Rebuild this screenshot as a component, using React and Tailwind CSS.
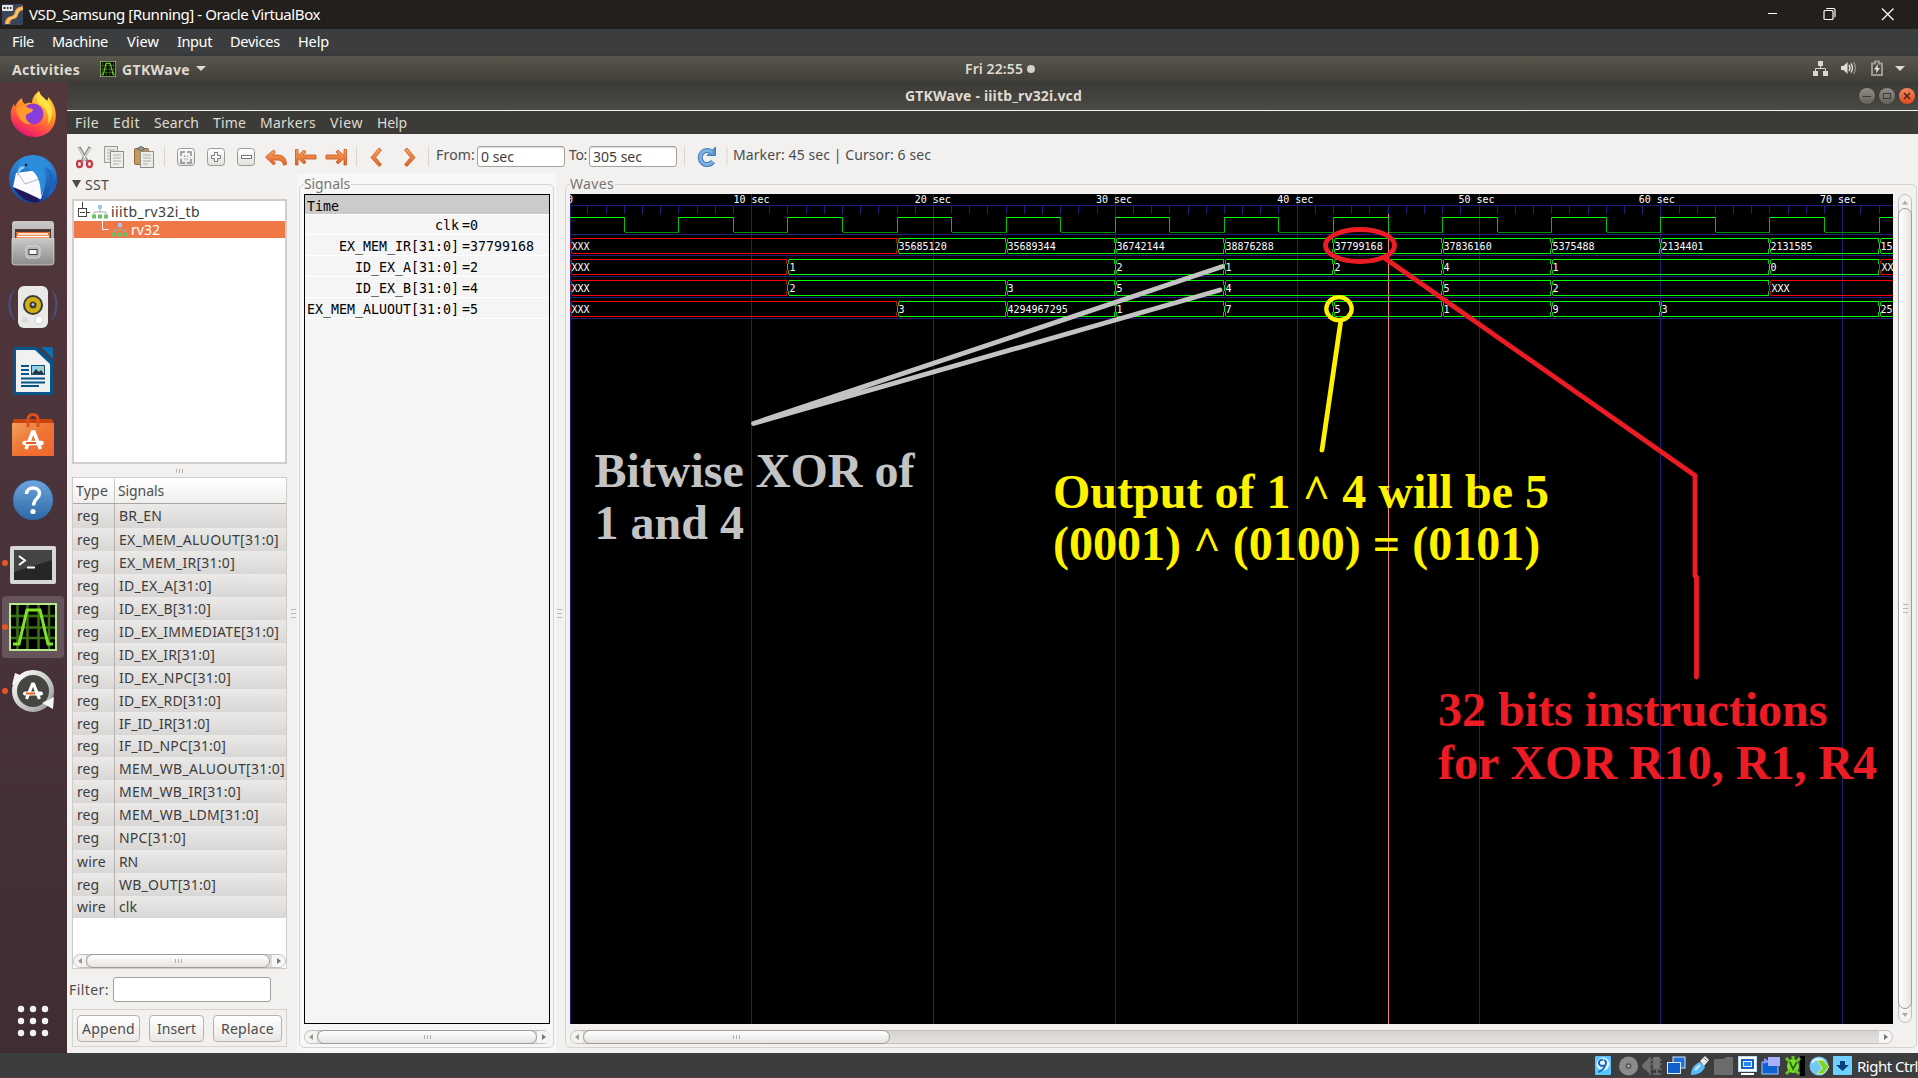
import React, { useLayoutEffect, useRef, useState } from "react";

/* Text run whose tracking is adjusted so that it spans `w` pixels. */
function Fit({ w, children, className = "" }) {
  const ref = useRef(null);
  const [ls, setLs] = useState(0);
  useLayoutEffect(() => {
    const natural = ref.current.getBoundingClientRect().width;
    setLs((w - natural) / String(children).length);
  }, [w, children]);
  return (
    <span ref={ref} className={"inline-block shrink-0 whitespace-pre " + className} style={{ letterSpacing: ls + "px" }}>
      {children}
    </span>
  );
}

/* ---------- host window ---------- */

const hostMenu = [["File", 22, 40], ["Machine", 56, 75], ["View", 32, 50], ["Input", 35, 53], ["Devices", 50, 68], ["Help", 31, 40]];

function HostTitle() {
  return (
    <div className="flex h-[29px] items-center bg-[#231f1c] pl-[2px] text-[15px] text-white">
      <svg width="21" height="21" viewBox="0 0 21 21" className="mr-[6px]">
        <rect width="21" height="21" rx="1" fill="#39455a" />
        <path d="M3 20q0-7 6-8 3 0 4-5 1-4 8-5v4q-4 1-5 5-1 4-5 4-3 1-3 5z" fill="#f6a23a" />
        <path d="M5 20q0-5 5-6 4-1 5-6 1-3 6-3" fill="none" stroke="#fbd078" strokeWidth="1.500" />
        <rect x="0" y="1" width="11" height="6" rx="1" fill="#e8e8e8" />
        <path d="M1.500 3h2v2h-2zM5 3h1.500v2H5zM8 3h1.500v2H8z" fill="#333" />
      </svg>
      <Fit w={291} className="-mt-[2px]">VSD_Samsung [Running] - Oracle VirtualBox</Fit>
      <svg width="150" height="29" viewBox="0 0 150 29" className="ml-auto" fill="none" stroke="#fff">
        <path d="M-3 13.500h12" />
        <path d="M56 11.500q0-1 1-1h7q1 0 1 1v7q0 1-1 1h-7q-1 0-1-1zM58.500 9q0-.5 1-.5h6q1.500 0 1.500 1.500v6.500q0 .5-.5.500" strokeWidth="1.200" />
        <path d="M114 8.500l11.500 11.500M125.500 8.500l-11.500 11.500" strokeWidth="1.200" />
      </svg>
    </div>
  );
}

function HostMenu() {
  return (
    <div className="flex h-[27px] items-center border-b-[3px] border-[#36383a] bg-[#3c3d3f] pl-[12px] text-[14.5px] text-white">
      {hostMenu.map(([t, w, s]) => (
        <div key={t} className="flex shrink-0" style={{ width: s }}>
          <Fit w={w}>{t}</Fit>
        </div>
      ))}
    </div>
  );
}

function HostStatus() {
  return (
    <div className="flex h-[25px] shrink-0 items-center justify-end overflow-hidden border-b border-[#4b4040] bg-[#3c3d3f] pt-[2px] text-[15px] text-white">
      <svg width="260" height="20" viewBox="1594 1057 260 20" className="mr-[3px] shrink-0">
        <rect x="1595" y="1057" width="16" height="19" rx="1" fill="#5cc4ff" />
        <circle cx="1603" cy="1065" r="6.500" fill="#eaf6ff" />
        <path d="M1603 1061a3 3 0 1 0 1 5M1604 1061q3 1 1.500 5-2 5-7 7" stroke="#1769c8" strokeWidth="2" fill="none" />
        <circle cx="1628.500" cy="1067" r="9.500" fill="#8b8b8b" />
        <circle cx="1628.500" cy="1067" r="3" fill="#5a5a5a" />
        <circle cx="1628.500" cy="1067" r="1" fill="#ddd" />
        <path d="M1643 1066l6-6v13l-6-5zM1650 1058v18" fill="#6f6f6f" stroke="#6f6f6f" strokeWidth="1.500" />
        <rect x="1653" y="1058" width="7" height="11" rx="1" fill="#777" />
        <path d="M1651 1061h11M1651 1065h11M1652 1070h10M1657 1070v6M1653 1075h8" stroke="#707070" strokeWidth="1.500" />
        <rect x="1673" y="1058" width="12" height="11" fill="#1f6fd8" stroke="#cfe5fb" />
        <rect x="1667.500" y="1063.500" width="13" height="11" fill="#0f60cf" stroke="#d9ecff" />
        <path d="M1691 1076c0-7 4-11 9-13l5 5c-2 5-7 8-14 8z" fill="#58bdf5" />
        <path d="M1695 1071l5-5" stroke="#c8efff" strokeWidth="2" />
        <path d="M1700 1062l5-5 4 4-5 6z" fill="#e8e8e8" />
        <path d="M1704.500 1059.500l2 2" stroke="#444" />
        <path d="M1714 1060h10l2-2h7v18h-19z" fill="#6c6c6c" />
        <rect x="1738.500" y="1057.500" width="18" height="15" fill="#fff" stroke="#b9dcff" />
        <rect x="1741" y="1060" width="13" height="10" fill="#1161d2" />
        <rect x="1743.500" y="1062.500" width="8" height="5" fill="#2b85ef" stroke="#dff" />
        <path d="M1741 1075h13" stroke="#fff" strokeWidth="2" />
        <rect x="1762" y="1063" width="16" height="12" fill="#0f62d3" stroke="#9fc9f7" />
        <rect x="1768" y="1058" width="12" height="9" fill="#a9b0ff" />
        <path d="M1764 1059l5 3-5 3z" fill="#8b94f7" />
        <rect x="1800" y="1057" width="5" height="20" fill="#000" />
        <ellipse cx="1793" cy="1067" rx="6" ry="7" fill="#7bdd2c" />
        <path d="M1786 1059l4 4M1800 1059l-4 4M1786 1075l4-4M1799 1075l-4-4M1793 1057v4" stroke="#65c71e" strokeWidth="3" />
        <path d="M1790 1063l3 7 4-7" stroke="#24680a" strokeWidth="1.800" fill="none" />
        <circle cx="1819" cy="1067" r="9.500" fill="#73c8f4" />
        <path d="M1812 1064c3-5 8-5 12-2" stroke="#d9f3ff" strokeWidth="2" fill="none" />
        <path d="M1817 1061h6l6 7-6 7h-6l5-6z" fill="#7fd62a" stroke="#e6ffd0" strokeWidth=".7" />
        <rect x="1833" y="1057" width="19" height="19" rx="1" fill="#6ed0ff" />
        <path d="M1840 1062h5v4h4l-6.500 6-6.500-6h4z" fill="#0a3d80" />
      </svg>
      <Fit w={61}>Right Ctrl</Fit>
    </div>
  );
}

/* ---------- guest desktop ---------- */

function WaveLogo({ size }) {
  return (
    <svg width={size} height={size} viewBox="0 0 48 48">
      <rect width="48" height="48" fill="#b6ea8c" />
      <rect x="2" y="2" width="44" height="44" fill="#000" />
      <path d="M8.500 2v44M18.500 2v44M29.500 2v44M40 2v44M2 13h44M2 24.500h44M2 35h44" stroke="#3c7016" strokeWidth="2.500" />
      <path d="M4 41h6L18 7h13l8 34h5" fill="none" stroke="#7fe32b" strokeWidth="3" />
    </svg>
  );
}

function TopPanel() {
  return (
    <div className="flex h-[26px] items-center bg-linear-to-b from-[#59564c] to-[#403e39] text-[14px] font-bold text-[#dfdbd2]">
      <Fit w={68} className="ml-[12px] pt-[2px]">Activities</Fit>
      <div className="ml-[20px] mr-[6px]"><WaveLogo size={16} /></div>
      <Fit w={68} className="pt-[2px]">GTKWave</Fit>
      <svg width="10" height="6" className="ml-[6px]"><path d="M0 0h10L5 5z" fill="#dfdbd2" /></svg>
      <Fit w={58} className="ml-[759px] font-semibold">Fri 22:55</Fit>
      <div className="ml-[4px] h-[8px] w-[8px] rounded-full bg-[#d3d0c9]" />
      <svg width="100" height="18" viewBox="1810 61 100 18" className="ml-auto mr-[8px]">
        <path d="M1818 62h5v5h-5zM1813 72h5v5h-5zM1823 72h5v5h-5z" fill="#d9d6cf" />
        <path d="M1820.500 67v3M1815.500 72v-2.500h10V72" stroke="#d9d6cf" fill="none" />
        <path d="M1841 67h2.500l4-4v12l-4-4H1841z" fill="#e0ddd6" />
        <path d="M1849 66q2 3 0 6M1851 64.500q3 4.500 0 9" stroke="#e0ddd6" strokeWidth="1.400" fill="none" />
        <path d="M1853.500 63q4 6 0 12" stroke="#8b8982" strokeWidth="1.400" fill="none" />
        <path d="M1872 64.500h3v-2h4v2h3v11.500h-10z" fill="none" stroke="#9b9992" strokeWidth="2" />
        <path d="M1878 65l-4 5.500h2.500l-.5 4 4-5.500h-2.500z" fill="#e8e5de" />
        <path d="M1895 67h10l-5 5z" fill="#dfdbd2" />
      </svg>
    </div>
  );
}

function Dock() {
  return (
    <div className="flex w-[67px] shrink-0 flex-col bg-linear-to-b from-[#53373b] via-[#48333a] to-[#3f2d32]">
      <svg width="67" height="971" viewBox="0 82 67 971">
        <defs>
          <linearGradient id="ff" x1=".8" y1="0" x2=".3" y2="1"><stop offset="0" stopColor="#ffe847" /><stop offset=".45" stopColor="#ff9226" /><stop offset=".75" stopColor="#ff4348" /><stop offset="1" stopColor="#e1107f" /></linearGradient>
          <radialGradient id="fp"><stop offset="0" stopColor="#7a42e8" /><stop offset="1" stopColor="#9a38c8" /></radialGradient>
          <linearGradient id="gr" x1="0" y1="0" x2="0" y2="1"><stop offset="0" stopColor="#c9c9c7" /><stop offset="1" stopColor="#8c8c8a" /></linearGradient>
          <linearGradient id="bl" x1="0" y1="0" x2="0" y2="1"><stop offset="0" stopColor="#6fa5dd" /><stop offset="1" stopColor="#2b68a6" /></linearGradient>
          <linearGradient id="tb" x1="0" y1="0" x2="0" y2="1"><stop offset="0" stopColor="#2f92e2" /><stop offset="1" stopColor="#17469a" /></linearGradient>
          <linearGradient id="bg" x1="0" y1="0" x2="1" y2="1"><stop offset="0" stopColor="#eea15c" /><stop offset=".5" stopColor="#ee7434" /><stop offset="1" stopColor="#f0662c" /></linearGradient>
          <linearGradient id="wh" x1="0" y1="0" x2="1" y2="1"><stop offset="0" stopColor="#fff" /><stop offset="1" stopColor="#9a9a98" /></linearGradient>
        </defs>
        {/* browser */}
        <path d="M22 98c0 3 1 5 3 6 3-2 6-1 7-1 0-5 3-9 7-12 1 5 5 7 8 10 1-1 1-3 1-4 11 11 9 26 3 33-8 9-22 9-31 2-10-7-12-20-6-28l1 3c1-4 4-7 7-9z" fill="url(#ff)" />
        <circle cx="33" cy="114" r="10.500" fill="url(#fp)" />
        <path d="M16 109c4-4 9-4 12-1l5 1c0 4-5 4-7 6-1 4 2 8 6 9-7 2-14-4-16-15z" fill="#ff9a2b" />
        <path d="M39 91c1 6 9 8 12 16 2 5 1 12-3 17 2-9-2-17-8-19-4-3-5-9-1-14z" fill="#ffe144" />
        {/* mail */}
        <circle cx="33" cy="179" r="24" fill="url(#tb)" />
        <path d="M16 173l22-3 7 14-4 15c-10-2-21-6-28-12z" fill="#fbfbfd" />
        <path d="M18 173l7 11 17-6" fill="none" stroke="#b8b8be" />
        <path d="M13 187q13 5 25 11l2 4q-16 3-27-15z" fill="#24185c" />
        <path d="M17 171c1-9 8-16 17-15 9 2 15 6 18 14l-9-3c4 8 4 18-2 29 0-12-3-22-10-26-5-3-9-3-14 1z" fill="#2c8ddd" />
        <path d="M45 166q10 12 2 32 11-9 10-21-3 4-4 5 1-10-8-16z" fill="#1c62bd" />
        <path d="M17 177q0-10 6-11l2 2q-5 1-8 9z" fill="#8ecbf5" /><circle cx="26" cy="165" r="1.200" fill="#111" />
        {/* file cabinet */}
        <rect x="12" y="221" width="42" height="44" rx="3" fill="url(#gr)" />
        <rect x="15" y="229" width="36" height="12" fill="#4b3a33" />
        <path d="M16 232h34v9H16z" fill="#e8702b" /><path d="M18 234h30M17 236.500h32" stroke="#fff" strokeWidth="1.300" />
        <path d="M12 238.500h42V262q0 3-3 3H15q-3 0-3-3z" fill="url(#gr)" stroke="#dcdcda" strokeWidth=".7" />
        <rect x="26" y="246" width="14" height="12" rx="3" fill="#b5b5b3" stroke="#d8d8d6" />
        <rect x="29" y="249.500" width="8" height="5" fill="#f5f5f5" stroke="#444" />
        {/* music */}
        <path d="M14 290q-8 14 0 30M52 290q8 14 0 30M11 294q-4 11 0 22M55 294q4 11 0 22" stroke="#4c5078" strokeWidth="1.200" fill="none" />
        <rect x="18" y="286" width="30" height="42" rx="6" fill="#e9e9e7" />
        <circle cx="33" cy="305" r="10" fill="#3b3b39" /><circle cx="33" cy="305" r="8" fill="#d2b013" /><circle cx="33" cy="305" r="3.500" fill="#3c3f48" /><circle cx="33" cy="304.500" r="1.300" fill="#ccd" />
        <circle cx="39" cy="320" r="4" fill="#fff" stroke="#c8c8c8" strokeWidth=".8" /><circle cx="25" cy="320" r="3" fill="#dcdcda" />
        {/* writer */}
        <path d="M13 349q0-2 2-2h22l16 14v32q0 2-2 2H15q-2 0-2-2z" fill="#06568a" />
        <path d="M16 350h19l15 14v28H16z" fill="#f1f1f1" />
        <path d="M41 347h10q2 0 2 2v10z" fill="#0a70ad" />
        <path d="M21 366h8M21 370h8M21 374h8M21 378.500h24M21 382.500h24M21 386h18" stroke="#06568a" strokeWidth="1.800" />
        <rect x="31.500" y="365.500" width="13" height="9" fill="#8fd0ee" stroke="#06568a" /><path d="M32 374l4-5 3 3 2-2 3 4z" fill="#333" /><circle cx="42" cy="368" r="1.500" fill="#f4c63c" />
        {/* software */}
        <path d="M14 419h38l2 5H12z" fill="#c9430f" />
        <path d="M12 423h42v33H12z" fill="url(#bg)" />
        <path d="M28 427v-7q0-5.500 5-5.500t5 5.500v7" fill="none" stroke="#de4f1c" strokeWidth="3" />
        <path d="M26 449l6.500-17h1.500l6.500 17" fill="none" stroke="#fff" strokeWidth="3.500" /><path d="M24.500 443h17" stroke="#fff" strokeWidth="4.500" strokeLinecap="round" /><path d="M26 443h10" stroke="#ea5a1c" strokeWidth="2" />
        {/* help */}
        <circle cx="33" cy="500" r="20" fill="url(#bl)" stroke="#2a609a" strokeWidth=".6" />
        <path d="M26.500 494c0-4 3-6 6.500-6 4 0 6.500 2.500 6.500 5.500 0 5-6 5-6 12" fill="none" stroke="#fff" strokeWidth="3.400" /><circle cx="33" cy="511.500" r="2.600" fill="#fff" />
        {/* terminal */}
        <rect x="10" y="546" width="46" height="38" rx="2" fill="#d7d7d5" /><rect x="14" y="550" width="38" height="30" fill="#262626" /><path d="M14 550h38v10l-38 12z" fill="#444" />
        <path d="M19 556l6 4.500-6 4.500" fill="none" stroke="#fff" strokeWidth="2" /><path d="M27 567.500h8" stroke="#fff" strokeWidth="2" />
        {/* wave viewer */}
        <rect x="2" y="596" width="62" height="62" rx="4" fill="#67545a" />
        <svg x="9" y="603"><WaveLogo size={48} /></svg>
        {/* updater */}
        <circle cx="33" cy="691" r="18.500" fill="#454642" stroke="url(#wh)" strokeWidth="5" />
        <path d="M12 685l3-12 10 4zM54 697l-1 12-11-6z" fill="#f4f4f2" />
        <path d="M26.500 699l6-15h1l6 15" fill="none" stroke="#fff" strokeWidth="3.200" /><path d="M25 693.500h16" stroke="#fff" strokeWidth="4" strokeLinecap="round" /><path d="M26 693.500h9" stroke="#ea5a1c" strokeWidth="2" />
        {[563, 627, 691].map((y) => <circle key={y} cx="5" cy={y} r="3" fill="#e95420" />)}
        {[1009, 1021, 1033].map((y) => [21, 33, 45].map((x) => <circle key={x + "-" + y} cx={x} cy={y} r="3.200" fill="#f2f2f2" />))}
      </svg>
    </div>
  );
}

/* ---------- wave viewer window ---------- */

const appMenu = [["File", 24, 38], ["Edit", 27, 41], ["Search", 45, 59], ["Time", 33, 47], ["Markers", 56, 70], ["View", 33, 47], ["Help", 30, 40]];

function WindowTitle() {
  return (
    <div className="flex h-[29px] items-center border-b border-[#f2f1f0] bg-linear-to-b from-[#3b3a36] to-[#4b4943] pl-[838px] text-[14px] font-bold text-[#dfdbd2]">
      <Fit w={177}>GTKWave - iiitb_rv32i.vcd</Fit>
      <div className="ml-auto mr-[3px] flex gap-[4px]">
        <div className="flex h-4 w-4 items-center justify-center rounded-full bg-linear-to-b from-[#8e8c84] to-[#65635c] shadow"><div className="h-px w-2 bg-[#3b3a36]" /></div>
        <div className="flex h-4 w-4 items-center justify-center rounded-full bg-linear-to-b from-[#8e8c84] to-[#65635c] shadow"><div className="h-[6px] w-2 border border-[#3b3a36]" /></div>
        <div className="flex h-4 w-4 items-center justify-center rounded-full bg-linear-to-b from-[#f58461] to-[#df4b1c] shadow">
          <svg width="8" height="8"><path d="M1 1l6 6M7 1L1 7" stroke="#4d2012" strokeWidth="1.500" /></svg>
        </div>
      </div>
    </div>
  );
}

function AppMenu() {
  return (
    <div className="flex h-[23px] items-center bg-[#3c3b37] pl-[8px] text-[14px] text-[#dfdbd2]">
      {appMenu.map(([t, w, s]) => (
        <div key={t} className="flex shrink-0" style={{ width: s }}>
          <Fit w={w}>{t}</Fit>
        </div>
      ))}
    </div>
  );
}

function Entry({ children }) {
  return (
    <div className="flex h-[21px] w-[88px] items-center rounded-[3px] border border-[#a5a19b] bg-white pl-[3px] text-[#3c3c3c] shadow-[inset_0_1px_1px_#ddd]">
      {children}
    </div>
  );
}

function Toolbar() {
  return (
    <div className="flex h-[39px] items-start bg-[#f2f1f0] pt-[11px] text-[14px] text-[#4c4c4c]">
      <svg width="367" height="26" viewBox="67 144 367 26" className="shrink-0">
        <defs>
          <linearGradient id="or" x1="0" y1="0" x2="0" y2="1"><stop offset="0" stopColor="#f4a45e" /><stop offset="1" stopColor="#e0622a" /></linearGradient>
          <linearGradient id="bt" x1="0" y1="0" x2="0" y2="1"><stop offset="0" stopColor="#fff" /><stop offset="1" stopColor="#e0e0de" /></linearGradient>
        </defs>
        <path d="M79 146l8 14M90 146l-8 14" stroke="#8b8d89" strokeWidth="3" /><path d="M79 147l7 12M90 147l-7 12" stroke="#e2e3e0" strokeWidth="1.300" />
        <ellipse cx="79.500" cy="163" rx="2.500" ry="3.200" fill="none" stroke="#c83a46" strokeWidth="2.200" /><ellipse cx="89.500" cy="163" rx="2.500" ry="3.200" fill="none" stroke="#c83a46" strokeWidth="2.200" />
        <rect x="104.500" y="145.500" width="13" height="16" fill="#ecece9" stroke="#9a9b97" /><path d="M107 149h8M107 152h8M107 155h4M107 158h4" stroke="#aaa" />
        <rect x="110.500" y="150.500" width="13" height="16" fill="#f0f0ed" stroke="#8e8f8b" /><path d="M113 154h8M113 157h8M113 160h8M113 163h6" stroke="#aaa" />
        <rect x="134.500" y="147.500" width="14" height="16" rx="1" fill="#c4985a" stroke="#8f6a35" /><path d="M138 149v-2q3-3 6 0v2z" fill="#999" stroke="#666" />
        <rect x="140.500" y="150.500" width="13" height="16" fill="#ecece9" stroke="#8e8f8b" /><path d="M143 154h8M143 157h8M143 160h8M143 163h5" stroke="#aaa" />
        <path d="M164.500 146v19M356.500 146v19M428.500 146v19" stroke="#d9d6d2" />
        {[177.500, 207.500, 237.500].map((x) => <rect key={x} x={x} y="147.500" width="17" height="17" rx="3" fill="url(#bt)" stroke="#9a9b97" />)}
        <path d="M181 155v-4h4M187 151h4v4M191 158v4h-4M185 162h-4v-4" fill="none" stroke="#888" strokeWidth="1.400" /><path d="M184.500 154.500v1h1M187.500 154.500v1M184.500 158h1M187.500 158h-1" fill="none" stroke="#888" />
        <path d="M214.500 151.500h3v3h3v3h-3v3h-3v-3h-3v-3h3z" fill="#fff" stroke="#777" />
        <rect x="241.500" y="154.500" width="10" height="3" fill="#fff" stroke="#777" />
        <g fill="url(#or)" stroke="#cf5f25" strokeWidth=".9" strokeLinejoin="round">
          <path d="M265.500 156l8-7 2 2-2.500 3h5q8 0 8.500 9l-1 1h-2q-1-5-6-5h-5l3 3-2 2z" />
          <path d="M295.500 148.500h2.500v6l6-5.500 2 2-3 3h13v4h-13l3 3-2 2-6-5.500v6.500h-2.500z" />
          <path d="M346.500 148.500h-2.500v6l-6-5.500-2 2 3 3h-13v4h13l-3 3 2 2 6-5.500v6.500h2.500z" />
          <path d="M379 147l2.500 2-6 7.500 6 7-2.500 2-8-9z" />
          <path d="M407 147l-2.500 2 6 7.500-6 7 2.500 2 8-9z" />
        </g>
      </svg>
      <Fit w={39} className="ml-[2px]">From:</Fit>
      <div className="ml-[2px] mt-[1px]"><Entry><Fit w={33}>0 sec</Fit></Entry></div>
      <Fit w={18} className="ml-[4px]">To:</Fit>
      <div className="ml-[2px] mt-[1px]"><Entry><Fit w={49}>305 sec</Fit></Entry></div>
      <svg width="56" height="24" viewBox="677 145 56 24" className="shrink-0">
        <path d="M684.500 147v18M727 147v18" stroke="#d9d6d2" />
        <path d="M713 161.500a7 7 0 1 1-1-9" fill="none" stroke="#3f7ab8" strokeWidth="5" /><path d="M707 155.500h8.500V147z" fill="#5d97d3" stroke="#3f7ab8" />
        <path d="M713 161.500a7 7 0 1 1-1-9" fill="none" stroke="#7fb0e2" strokeWidth="3" />
      </svg>
      <Fit w={198}>Marker: 45 sec | Cursor: 6 sec</Fit>
    </div>
  );
}

function Grip({ vertical }) {
  return (
    <div className={vertical ? "flex flex-col gap-[3px]" : "flex gap-[2px]"}>
      {[0, 1, 2].map((i) => <div key={i} className={vertical ? "h-px w-[5px] bg-[#bbb8b4]" : "h-[4px] w-px bg-[#b3b0ac]"} />)}
    </div>
  );
}

/* Horizontal scroll bar; `thumb` is the thumb's width class. */
function HScroll({ thumb }) {
  return (
    <div className="flex h-[14px] w-full items-center rounded-full border border-[#c4c1bd] bg-linear-to-b from-[#d6d3d0] to-[#e3e2e0]">
      <div className="flex h-full w-[12px] shrink-0 items-center justify-center rounded-l-full bg-[#f4f3f2]"><svg width="4" height="6"><path d="M4 0v6L0 3z" fill="#9a9895" /></svg></div>
      <div className={"flex h-[14px] shrink-0 items-center justify-center rounded-full border border-[#a09b96] bg-linear-to-b from-white to-[#e6e4e2] " + thumb}><Grip /></div>
      <div className="ml-auto flex h-full w-[13px] shrink-0 items-center justify-center rounded-r-full bg-[#f7f6f6]"><svg width="4" height="6"><path d="M0 0v6l4-3z" fill="#777" /></svg></div>
    </div>
  );
}

function TreeIcon({ className }) {
  return (
    <svg width="16" height="14" viewBox="0 0 16 14" className={className}>
      <rect x="6" y="0" width="4" height="4" fill="#a3c4ee" />
      <path d="M8 4v3M2 9V7h12v2" stroke="#aaa" fill="none" />
      <path d="M0 9.500h4v4H0zM6 9.500h4v4H6zM12 9.500h4v4h-4z" fill="#6cc067" />
    </svg>
  );
}

const rows = [
  ["reg", "BR_EN", 43, 24], ["reg", "EX_MEM_ALUOUT[31:0]", 160], ["reg", "EX_MEM_IR[31:0]", 116], ["reg", "ID_EX_A[31:0]", 93],
  ["reg", "ID_EX_B[31:0]", 92], ["reg", "ID_EX_IMMEDIATE[31:0]", 160], ["reg", "ID_EX_IR[31:0]", 96], ["reg", "ID_EX_NPC[31:0]", 112],
  ["reg", "ID_EX_RD[31:0]", 102], ["reg", "IF_ID_IR[31:0]", 91], ["reg", "IF_ID_NPC[31:0]", 107, 22], ["reg", "MEM_WB_ALUOUT[31:0]", 166],
  ["reg", "MEM_WB_IR[31:0]", 122], ["reg", "MEM_WB_LDM[31:0]", 140], ["reg", "NPC[31:0]", 67, 24], ["wire", "RN", 19],
  ["reg", "WB_OUT[31:0]", 97], ["wire", "clk", 18, 22],
];

function Button({ children, w, className }) {
  return (
    <div className={"flex h-[27px] items-center justify-center rounded-[4px] border border-[#b6b2ad] bg-linear-to-b from-white to-[#eae8e6] pt-[1px] " + className}>
      <Fit w={w}>{children}</Fit>
    </div>
  );
}

function SidePanel() {
  return (
    <div className="flex w-[224px] shrink-0 flex-col pl-[5px] text-[14px] text-[#4c4c4c]">
      <div className="flex h-[26px] items-center pb-[2px]">
        <svg width="9" height="9" className="-mt-[4px] mr-[4px]"><path d="M0 1h9L4.500 9z" fill="#4c4c4c" /></svg>
        <Fit w={24}>SST</Fit>
      </div>
      <div className="h-[265px] w-[215px] border-2 border-[#d0cdca] bg-white pt-[1px] text-[#3c3c3c]">
        <div className="flex h-[19px] items-center">
          <svg width="15" height="19" className="ml-[2px]"><path d="M6.500 0v6M11 10.500h3" stroke="#444" /><rect x="2.500" y="6.500" width="8" height="8" fill="#fff" stroke="#444" /><path d="M4 10.500h5" stroke="#444" /></svg>
          <TreeIcon className="ml-[1px] mr-[3px]" />
          <Fit w={89}>iiitb_rv32i_tb</Fit>
        </div>
        <div className="flex h-[17px] items-center bg-[#f07746] text-white">
          <svg width="8" height="17" className="ml-[28px]"><path d="M.5 0v8.500h6" stroke="#fff" fill="none" /></svg>
          <TreeIcon className="ml-[2px] mr-[3px]" />
          <Fit w={29}>rv32</Fit>
        </div>
      </div>
      <div className="flex h-[13px] w-[215px] items-center justify-center"><Grip /></div>
      <div className="flex h-[492px] w-[215px] flex-col border border-[#cfccc9] bg-white">
        <div className="flex h-[26px] shrink-0 items-center border-b border-[#aaa7a4] bg-linear-to-b from-white to-[#f0efee] pt-[1px]">
          <div className="flex h-full w-[42px] items-center border-r border-[#c9c6c3] pl-[3px]"><Fit w={32}>Type</Fit></div>
          <Fit w={46} className="ml-[3px]">Signals</Fit>
        </div>
        {rows.map(([type, name, w, h = 23]) => (
          <div key={name} className="flex shrink-0 items-center bg-linear-to-b from-[#ebeae9] to-[#d9d7d5] text-[#3c3c3c]" style={{ height: h }}>
            <div className="flex h-full w-[42px] items-center border-r border-[#b5b2af] pl-[4px]"><Fit w={type === "reg" ? 22 : 29}>{type}</Fit></div>
            <div className="pl-[4px]"><Fit w={w}>{name}</Fit></div>
          </div>
        ))}
        <div className="mt-auto"><HScroll thumb="w-[184px]" /></div>
      </div>
      <div className="-ml-[3px] flex h-[40px] items-center">
        <Fit w={40} className="pt-[1px]">Filter:</Fit>
        <div className="ml-[4px] h-[25px] w-[158px] rounded-[3px] border border-[#a5a19b] bg-white" />
      </div>
      <div className="flex h-[38px] w-[215px] items-center border border-[#d6d3d0] pl-[4px]">
        <Button w={53} className="w-[63px]">Append</Button>
        <Button w={39} className="ml-[9px] w-[55px]">Insert</Button>
        <Button w={53} className="ml-[9px] w-[69px]">Replace</Button>
      </div>
    </div>
  );
}

const traces = [
  ["clk", "0"], ["EX_MEM_IR[31:0]", "37799168"], ["ID_EX_A[31:0]", "2"], ["ID_EX_B[31:0]", "4"], ["EX_MEM_ALUOUT[31:0]", "5"],
];

function SignalsPanel() {
  return (
    <div className="h-full w-[259px] shrink-0 rounded-t bg-[#f7f7f7] px-[2px] pt-[11px]">
      <div className="relative flex h-[864px] w-[255px] flex-col rounded-[5px] border border-[#d5d2cf] pl-[4px] pt-[9px]">
        <span className="absolute -top-[11px] left-[4px] bg-[#f7f7f7] pr-[1px] text-[14px] leading-[20px] text-[#777470]"><Fit w={46}>Signals</Fit></span>
        <div className="h-[830px] w-[246px] border border-black bg-[#f5f5f5] font-['DejaVu_Sans_Mono',monospace] text-[13.3px] text-black">
          <div className="flex h-[20px] items-center border-b border-white bg-[#cbcbcb] pl-[2px] pt-[4px]">Time</div>
          {traces.map(([n, v], i) => (
            <div key={n} className={"flex items-center border-b border-white " + (i === 0 ? "h-[20px] pt-[2px]" : "h-[21px] pt-[4px]")}>
              <div className="w-[154px] text-right">{n}</div>
              <div className="pl-[3px]">={v}</div>
            </div>
          ))}
        </div>
        <div className="mt-[6px] w-[246px]"><HScroll thumb="w-[220px]" /></div>
      </div>
    </div>
  );
}

const X = (t) => Math.floor(569.7 + 18.186 * t) + 0.5;
const END = 73;
const buses = [
  { y: 238, v: [[0, "XXX"], [18, "35685120"], [24, "35689344"], [30, "36742144"], [36, "38876288"], [42, "37799168"], [48, "37836160"], [54, "5375488"], [60, "2134401"], [66, "2131585"], [72, "15"]] },
  { y: 259, v: [[0, "XXX"], [12, "1"], [30, "2"], [36, "1"], [42, "2"], [48, "4"], [54, "1"], [66, "0"], [72, "XX"]] },
  { y: 280, v: [[0, "XXX"], [12, "2"], [24, "3"], [30, "5"], [36, "4"], [48, "5"], [54, "2"], [66, "XXX"]] },
  { y: 301, v: [[0, "XXX"], [18, "3"], [24, "4294967295"], [30, "1"], [36, "7"], [42, "5"], [48, "1"], [54, "9"], [60, "3"], [72, "25"]] },
];

function Waves() {
  const secs = Array.from({ length: END }, (_, i) => i);
  const tens = [0, 10, 20, 30, 40, 50, 60, 70];
  const periods = Array.from({ length: 13 }, (_, i) => i * 6);
  return (
    <svg width="1323" height="830" viewBox="570 194 1323 830" className="block bg-black">
      <g stroke="#20207a" shapeRendering="crispEdges">
        <path d="M570 205.500h1323M570 234.500h1323M570 255.500h1323M570 276.500h1323M570 297.500h1323M570 318.500h1323" />
        {secs.map((t) => <path key={t} d={`M${Math.max(X(t), 570.5)} 206v8`} />)}
        {tens.map((t) => <path key={t} d={`M${Math.max(X(t), 570.5)} 194v830`} />)}
      </g>
      <path d={`M${X(45)} 214V1024`} stroke="#ff8080" shapeRendering="crispEdges" />
      <g fill="none" shapeRendering="crispEdges">
        {periods.map((t) => (
          <g key={t}>
            <path d={`M${X(t)} 217.500H${X(t + 3)}`} stroke="#00ff00" />
            <path d={`M${X(t)} 217V232M${X(t + 3)} 217V232`} stroke="#00c400" />
            <path d={`M${X(t + 3)} 232.500H${X(t + 6)}`} stroke="#009000" />
          </g>
        ))}
      </g>
      {buses.map(({ y, v }) => v.map(([t, s], i) => {
        const a = Math.max(X(t), 570.5), b = i + 1 < v.length ? X(v[i + 1][0]) : 1900;
        const c = s[0] === "X" ? "#ff0000" : "#00ff00";
        return (
          <g key={y + "-" + t} fill="none" stroke={c} shapeRendering="crispEdges">
            <path d={`M${a + 1} ${y + 0.5}H${b - 1}M${a + 1} ${y + 15.500}H${b - 1}`} />
            <path d={`M${a + 1} ${y + 1}v4M${a} ${y + 5}v6M${a + 1} ${y + 11}v4M${b - 1} ${y + 1}v4M${b} ${y + 5}v6M${b - 1} ${y + 11}v4`} strokeOpacity=".8" />
          </g>
        );
      }))}
      <g fill="#fff" fontFamily="'DejaVu Sans Mono', monospace" fontSize="10">
        {tens.map((t) => <text key={t} x={t ? X(t) - 18 - (t / 10 - 1) * 0.75 : 567} y="202.500">{t ? t + " sec" : "0"}</text>)}
        {buses.map(({ y, v }) => v.map(([t, s]) => <text key={y + "-" + t} x={X(t) + (t < 18 || s[0] === "X" ? 2 : 1)} y={y + 12}>{s}</text>))}
      </g>
      {/* annotations */}
      <g fill="none" strokeLinecap="round" strokeLinejoin="round" strokeWidth="4.800">
        <path d="M1222.500 266.500L753.500 423.500L1220 290" stroke="#c3c3c3" />
        <ellipse cx="1360" cy="245.500" rx="34.500" ry="16" stroke="#ed1c24" />
        <path d="M1386 259L1695 475.500V576L1696.500 577V677" stroke="#ed1c24" />
        <ellipse cx="1339" cy="308.700" rx="12.700" ry="11.500" stroke="#fff200" strokeWidth="4.300" />
        <path d="M1340.500 323L1322 450" stroke="#fff200" />
      </g>
      <g fontFamily="'Liberation Serif', serif" fontWeight="700" fontSize="48">
        <g fill="#c3c3c3"><text x="594.500" y="486.500">Bitwise XOR of</text><text x="594.500" y="539">1 and 4</text></g>
        <g fill="#fff200"><text x="1053" y="507.500">Output of 1 ^ 4 will be 5</text><text x="1053" y="559.500">(0001) ^ (0100) = (0101)</text></g>
        <g fill="#ed1c24"><text x="1438" y="725.500">32 bits instructions</text><text x="1438" y="778.500">for XOR R10, R1, R4</text></g>
      </g>
    </svg>
  );
}

function WavesPanel() {
  return (
    <div className="h-full flex-1 pl-[2px] pt-[11px]">
      <div className="relative flex h-[864px] w-[1352px] flex-col rounded-[5px] border border-[#d5d2cf] pl-[4px] pt-[9px]">
        <span className="absolute -top-[11px] left-[4px] bg-[#f2f1f0] pr-[1px] text-[14px] leading-[20px] text-[#777470]"><Fit w={44}>Waves</Fit></span>
        <div className="flex">
          <Waves />
          <div className="ml-[5px] flex h-[829px] w-[14px] flex-col items-center rounded-full border border-[#c4c1bd] bg-[#f4f3f2]">
            <svg width="6" height="13" className="shrink-0"><path d="M0 9.500h6l-3-4z" fill="#aaa" /></svg>
            <div className="flex w-[14px] flex-1 items-center justify-center rounded-full border border-[#a09b96] bg-linear-to-r from-white to-[#e6e4e2]"><Grip vertical /></div>
            <svg width="6" height="13" className="shrink-0"><path d="M0 4h6l-3 4z" fill="#aaa" /></svg>
          </div>
        </div>
        <div className="mt-[6px] w-[1323px]"><HScroll thumb="w-[307px]" /></div>
      </div>
    </div>
  );
}

export default function App() {
  return (
    <div className="flex h-[1078px] w-[1918px] flex-col overflow-hidden bg-[#3c3d3f] font-['Noto_Sans',sans-serif] leading-[20px]">
      <HostTitle />
      <HostMenu />
      <TopPanel />
      <div className="flex h-[971px] shrink-0">
        <Dock />
        <div className="flex flex-1 flex-col bg-[#f2f1f0]">
          <WindowTitle />
          <AppMenu />
          <Toolbar />
          <div className="flex h-[880px]">
            <SidePanel />
            <div className="flex w-[6px] items-center"><Grip vertical /></div>
            <SignalsPanel />
            <div className="flex w-[7px] items-center justify-center"><Grip vertical /></div>
            <WavesPanel />
          </div>
        </div>
      </div>
      <HostStatus />
    </div>
  );
}
